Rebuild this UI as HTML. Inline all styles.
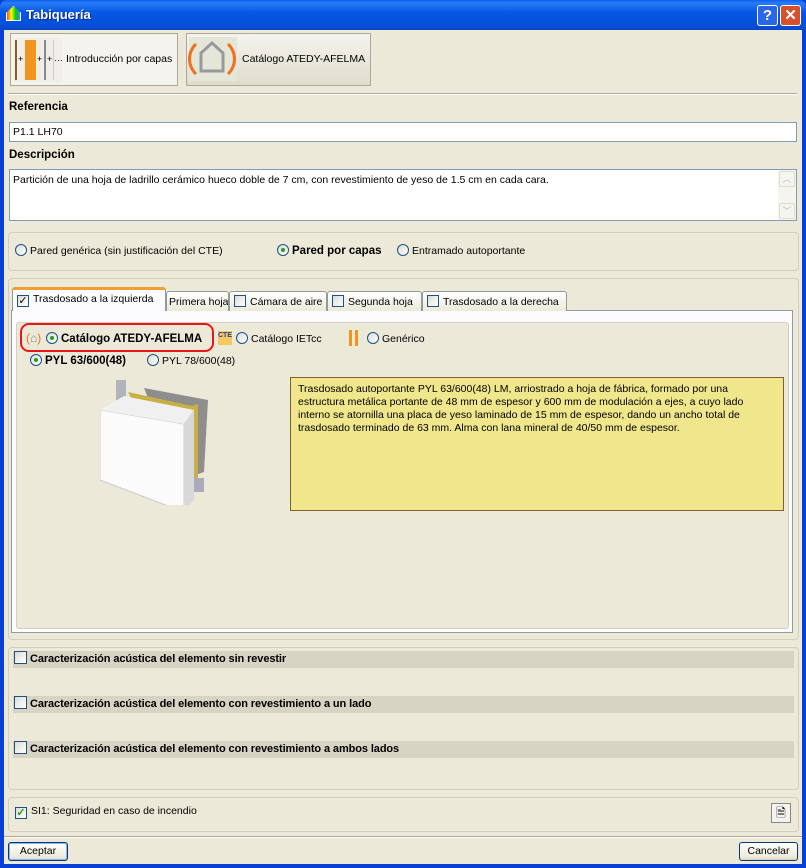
<!DOCTYPE html>
<html><head><meta charset="utf-8"><style>
*{box-sizing:border-box;margin:0;padding:0}
body{width:806px;height:868px;overflow:hidden;background:#0a3fd6;font-family:"Liberation Sans",sans-serif;font-size:10.5px;color:#000;position:relative}
.a{position:absolute;white-space:nowrap}
#title{left:0;top:0;width:806px;height:30px;background:linear-gradient(#0a5ff0 0%,#2a7cf8 10%,#0757e6 40%,#0350d8 85%,#0a46c8 100%);border-radius:7px 7px 0 0}
#body{left:4px;top:30px;width:798px;height:834px;background:#ece9d8}
.grp{position:absolute;border:1px solid #d0d0bf;border-radius:4px}
.btn{position:absolute;border:1px solid #003c74;border-radius:3px;background:linear-gradient(#fff,#ece9d8 85%,#d6d0c0);text-align:center;line-height:16px}
.rad{display:inline-block;width:12px;height:12px;border:1px solid #1c5180;border-radius:50%;background:linear-gradient(135deg,#dcdcd6,#fff);vertical-align:-2px;position:relative;margin-right:3px}
.rad.on::after{content:"";position:absolute;left:3px;top:3px;width:4px;height:4px;border-radius:50%;background:#21a121}
.chk{display:inline-block;width:12px;height:12px;border:1px solid #1c5180;background:linear-gradient(135deg,#dcdcd6,#fff);vertical-align:-2px;margin-right:4px;position:relative;font-size:11px;line-height:10px;text-align:center}
.tab{position:absolute;top:291px;height:20px;border:1px solid #919b9c;border-bottom:none;border-radius:3px 3px 0 0;background:linear-gradient(#fff,#ece9d8);padding:3px 4px 0;white-space:nowrap;overflow:hidden}
.row{position:absolute;left:13px;width:781px;height:17px;background:#d8d4c4;font-weight:bold;font-size:11px;line-height:17px;padding-left:1px;white-space:nowrap;letter-spacing:-0.1px}
</style></head><body>
<div id="title" class="a">
 <div class="a" style="left:6px;top:6px;width:15px;height:15px;border:1px solid #fff;background:linear-gradient(90deg,#f44,#ff0,#0c0,#48f);clip-path:polygon(50% 0,100% 45%,100% 100%,0 100%,0 45%)"></div>
 <div class="a" style="left:26px;top:7px;color:#fff;font-weight:bold;font-size:13px;text-shadow:1px 1px #0a2a80">Tabiquería</div>
 <div class="a" style="left:757px;top:5px;width:21px;height:21px;border:1px solid #fff;border-radius:3px;background:#2a66e8;color:#fff;font-weight:bold;font-size:15px;text-align:center;line-height:19px">?</div>
 <div class="a" style="left:780px;top:5px;width:21px;height:21px;border:1px solid #fff;border-radius:3px;background:#d8502a;color:#fff;font-weight:bold;font-size:15px;text-align:center;line-height:19px">✕</div>
</div>
<div id="body" class="a"></div>
<!-- top buttons -->
<div class="a" style="left:10px;top:33px;width:168px;height:53px;border:1px solid #aca899;background:#f4f3ee"></div>
<div class="a" style="left:14px;top:38px;width:48px;height:44px;background:#efeee8"></div>
<div class="a" style="left:15px;top:40px;width:2px;height:40px;background:#8a6020"></div>
<div class="a" style="left:25px;top:40px;width:11px;height:40px;background:#f0961e"></div>
<div class="a" style="left:44px;top:40px;width:2px;height:40px;background:#888"></div>
<div class="a" style="left:53px;top:40px;width:1px;height:40px;background:#ccc"></div>
<div class="a" style="left:18px;top:54px;font-size:9px">+</div>
<div class="a" style="left:37px;top:54px;font-size:9px">+</div>
<div class="a" style="left:47px;top:54px;font-size:9px">+</div>
<div class="a" style="left:54px;top:53px;font-size:9px">…</div>
<div class="a" style="left:66px;top:53px">Introducción por capas</div>
<div class="a" style="left:186px;top:33px;width:185px;height:53px;border:1px solid #aca899;background:linear-gradient(#f4f3ee,#e0dccc)"></div>
<div class="a" style="left:189px;top:37px;width:48px;height:44px;background:#e4e6d8"></div>
<div class="a" style="left:188px;top:36px;width:48px;height:46px;border-left:3px solid #f07020;border-right:3px solid #f07020;border-radius:50%/50%;border-top:3px solid transparent;border-bottom:3px solid transparent"></div>
<svg class="a" style="left:199px;top:40px" width="26" height="34"><polygon points="13,3 24,13 24,31 2,31 2,13" fill="none" stroke="#999" stroke-width="3"/></svg>
<div class="a" style="left:242px;top:53px">Catálogo ATEDY-AFELMA</div>
<div class="a" style="left:8px;top:93px;width:789px;height:2px;border-top:1px solid #aca899;border-bottom:1px solid #fff"></div>
<div class="a" style="left:9px;top:101px;font-weight:bold;font-size:11.5px">Referencia</div>
<div class="a" style="left:9px;top:122px;width:788px;height:20px;border:1px solid #7f9db9;background:#fff;padding:3px 3px">P1.1 LH70</div>
<div class="a" style="left:9px;top:149px;font-weight:bold;font-size:11.5px">Descripción</div>
<div class="a" style="left:9px;top:169px;width:788px;height:52px;border:1px solid #7f9db9;background:#fff;padding:4px 3px">Partición de una hoja de ladrillo cerámico hueco doble de 7 cm, con revestimiento de yeso de 1.5 cm en cada cara.</div>
<div class="a" style="left:778px;top:170px;width:18px;height:50px;background:#f5f4ee"></div>
<div class="a" style="left:779px;top:171px;width:16px;height:16px;border:1px solid #e0ddd0;border-radius:2px;color:#c0c0b8;text-align:center;font-size:9px;line-height:14px">︿</div>
<div class="a" style="left:779px;top:203px;width:16px;height:16px;border:1px solid #e0ddd0;border-radius:2px;color:#c0c0b8;text-align:center;font-size:9px;line-height:14px">﹀</div>
<!-- group 1 -->
<div class="grp" style="left:8px;top:232px;width:791px;height:39px"></div>
<div class="a" style="left:15px;top:244px"><span class="rad"></span>Pared genérica (sin justificación del CTE)</div>
<div class="a" style="left:277px;top:244px"><span class="rad on"></span><b style="font-size:11.5px">Pared por capas</b></div>
<div class="a" style="left:397px;top:244px"><span class="rad"></span>Entramado autoportante</div>
<!-- group 2 -->
<div class="grp" style="left:8px;top:278px;width:791px;height:362px"></div>
<div class="a" style="left:11px;top:310px;width:782px;height:323px;border:1px solid #919b9c;background:#fcfcfe"></div>
<div class="a" style="left:16px;top:322px;width:773px;height:307px;border:1px solid #d0d0bf;border-radius:3px;background:#ece9d8"></div>
<div class="tab" style="left:12px;top:287px;height:24px;width:154px;background:#fcfcfe;border-top:3px solid #f0a030;padding-top:3px"><span class="chk">✓</span>Trasdosado a la izquierda</div>
<div class="tab" style="left:166px;width:63px;padding-left:2px;padding-top:4px">Primera hoja</div>
<div class="tab" style="left:229px;width:98px"><span class="chk"></span>Cámara de aire</div>
<div class="tab" style="left:327px;width:95px"><span class="chk"></span>Segunda hoja</div>
<div class="tab" style="left:422px;width:145px"><span class="chk"></span>Trasdosado a la derecha</div>
<div class="a" style="left:20px;top:323px;width:194px;height:29px;border:2px solid #e81818;border-radius:9px"></div>
<div class="a" style="left:26px;top:331px;color:#f07020;font-size:12px">(<span style="color:#888">⌂</span>)</div>
<div class="a" style="left:46px;top:332px"><span class="rad on"></span><b style="font-size:11.5px">Catálogo ATEDY-AFELMA</b></div>
<div class="a" style="left:218px;top:331px;width:14px;height:14px;background:#f6c860;color:#2040a0;font-size:7px;font-weight:bold;text-align:center;line-height:10px">CTE</div>
<div class="a" style="left:236px;top:332px"><span class="rad"></span>Catálogo IETcc</div>
<div class="a" style="left:349px;top:330px;width:3px;height:16px;background:#f0961e"></div>
<div class="a" style="left:355px;top:330px;width:3px;height:16px;background:#f0961e"></div>
<div class="a" style="left:367px;top:332px"><span class="rad"></span>Genérico</div>
<div class="a" style="left:30px;top:354px"><span class="rad on"></span><b style="font-size:11.5px">PYL 63/600(48)</b></div>
<div class="a" style="left:147px;top:354px"><span class="rad"></span>PYL 78/600(48)</div>
<!-- image -->
<svg class="a" style="left:100px;top:380px" width="112" height="125" viewBox="0 0 112 125">
<rect x="16" y="0" width="10" height="20" fill="#b0b4bc"/>
<polygon points="44,8 108,20 104,92 80,100" fill="#8e8e8e"/>
<polygon points="28,12 92,26 98,24 98,104 80,112" fill="#c9b044"/>
<rect x="82" y="98" width="22" height="14" fill="#aab"/>
<polygon points="0,30 84,44 84,132 0,100" fill="#fbfbfb" stroke="#ccc"/>
<polygon points="0,30 24,16 94,30 84,44" fill="#f0f0f0"/>
<polygon points="84,44 94,30 94,120 84,130" fill="#d8d8d8"/>
</svg>
<div class="a" style="left:290px;top:377px;width:494px;height:134px;background:#f0e68c;border:1px solid #80602a;padding:5px 7px;line-height:13px;white-space:normal">Trasdosado autoportante PYL 63/600(48) LM, arriostrado a hoja de fábrica, formado por una estructura metálica portante de 48 mm de espesor y 600 mm de modulación a ejes, a cuyo lado interno se atornilla una placa de yeso laminado de 15 mm de espesor, dando un ancho total de trasdosado terminado de 63 mm. Alma con lana mineral de 40/50 mm de espesor.</div>
<!-- acoustic -->
<div class="grp" style="left:8px;top:647px;width:791px;height:143px"></div>
<div class="row" style="top:651px"><span class="chk" style="width:13px;height:13px;margin-right:3px"></span>Caracterización acústica del elemento sin revestir</div>
<div class="row" style="top:696px"><span class="chk" style="width:13px;height:13px;margin-right:3px"></span>Caracterización acústica del elemento con revestimiento a un lado</div>
<div class="row" style="top:741px"><span class="chk" style="width:13px;height:13px;margin-right:3px"></span>Caracterización acústica del elemento con revestimiento a ambos lados</div>
<div class="grp" style="left:8px;top:797px;width:791px;height:35px"></div>
<div class="a" style="left:15px;top:805px"><span class="chk" style="color:#21a121;font-weight:bold">✓</span>SI1: Seguridad en caso de incendio</div>
<div class="a" style="left:771px;top:803px;width:20px;height:20px;border:1px solid #888;background:#f4f3ee;font-size:12px;text-align:center;line-height:18px">🗎</div>
<div class="a" style="left:4px;top:836px;width:798px;height:2px;border-top:1px solid #aca899;border-bottom:1px solid #fff"></div>
<div class="btn" style="left:8px;top:842px;width:60px;height:19px;box-shadow:inset 0 0 0 1px #8cb4f2">Aceptar</div>
<div class="btn" style="left:739px;top:842px;width:59px;height:19px">Cancelar</div>
</body></html>
